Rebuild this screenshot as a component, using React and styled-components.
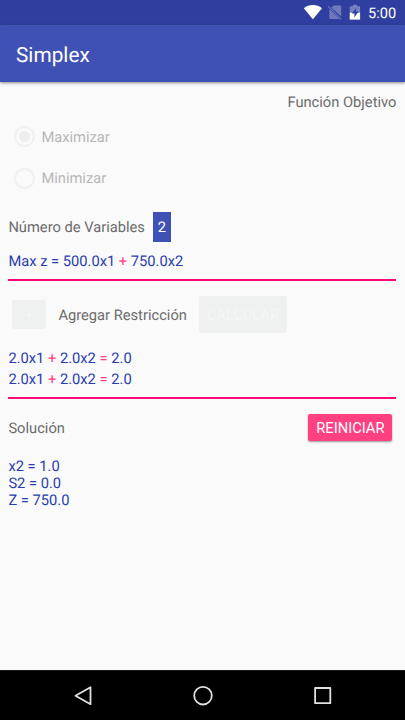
import styled, { createGlobalStyle } from "styled-components"

const GlobalStyle = createGlobalStyle`
  * {
    box-sizing: border-box;
  }
  body {
    margin: 0;
    background: #fafafa;
    font-family: Roboto, "Liberation Sans", sans-serif;
    text-rendering: geometricPrecision;
  }
`
const Screen = styled.div`
  display: flex;
  flex-direction: column;
  width: 405px;
  height: 720px;
  overflow: hidden;
  background: #fafafa;
  color: #6c6c6c;
  font-size: 14.7px;
`
const StatusBar = styled.header`
  display: flex;
  align-items: center;
  justify-content: flex-end;
  flex: none;
  height: 25px;
  padding-right: 9px;
  background: #303f9f;
  color: #fff;
  font-size: 14.6px;

  svg {
    display: block;
  }
`
const Clock = styled.span`
  margin: 1px 0 0 7px;
  width: 28px;
  white-space: nowrap;
`
const AppBar = styled.div`
  display: flex;
  align-items: center;
  flex: none;
  height: 57px;
  padding: 4px 16px 0;
  background: #3f51b5;
  color: #fff;
  box-shadow: 0 1px 3px rgba(0, 0, 0, 0.45);
`
const Title = styled.h1`
  margin: 0;
  font-size: 20.8px;
  font-weight: 400;
`
const Content = styled.main`
  display: flex;
  flex-direction: column;
  flex: 1;
  padding: 10px 8.6px 0 8.4px;
`
const SectionLabel = styled.div`
  height: 20px;
  line-height: 20px;
  text-align: right;
`
const RadioGroup = styled.div`
  display: flex;
  flex-direction: column;
  padding: 4px 0 0 6px;
`
const RadioOption = styled.label`
  display: flex;
  align-items: center;
  gap: 6px;
  height: 41.5px;
  color: #b7b7b7;
`
const RadioMark = styled.span`
  display: grid;
  place-items: center;
  width: 21px;
  height: 21px;
  border: 2px solid #f0f0f0;
  border-radius: 50%;

  &::after {
    content: "";
    width: 11px;
    height: 11px;
    border-radius: 50%;
    background: ${({ $checked }) => ($checked ? "#eeeeee" : "transparent")};
  }
`
const Row = styled.div`
  display: flex;
  align-items: center;
  justify-content: ${({ $spread }) => ($spread ? "space-between" : "flex-start")};
  height: ${({ $height }) => $height}px;
  margin-top: ${({ $top }) => $top}px;
`
const Count = styled.span`
  display: grid;
  place-items: center;
  width: 18px;
  height: 30px;
  margin-left: 8px;
  background: #3f51b5;
  color: #fff;
`
const Formula = styled.div`
  height: ${({ $line }) => $line}px;
  line-height: ${({ $line }) => $line}px;
  color: #2a3daf;
  white-space: pre;
`
const Operator = styled.span`
  color: #ff4081;
`
const FormulaList = styled.div`
  margin-top: ${({ $top }) => $top}px;
`
const Divider = styled.hr`
  width: 100%;
  height: 2px;
  margin: ${({ $top }) => $top}px 0 0;
  border: 0;
  background: #ff0a76;
`
const Button = styled.button`
  flex: none;
  width: ${({ $width }) => $width}px;
  height: ${({ $height }) => $height}px;
  margin: 0 4px;
  padding: 0;
  border: 0;
  border-radius: 2px;
  background: #ff4081;
  color: #fff;
  font: inherit;
  text-align: center;
  box-shadow: 0 1px 2px rgba(0, 0, 0, 0.4);

  &:disabled {
    background: #eff1f1;
    color: #f5f6f6;
    box-shadow: none;
  }
`
const AddLabel = styled.span`
  width: 129.5px;
  margin: 0 7px 0 8px;
  white-space: nowrap;
`
const NavBar = styled.nav`
  display: flex;
  align-items: center;
  justify-content: center;
  flex: none;
  gap: 96px;
  height: 50px;
  border-top: 1px solid #1c1c1c;
  background: #000;

  svg {
    display: block;
    fill: none;
    stroke: #e0e0e0;
    stroke-width: 1.8;
    stroke-linejoin: round;
  }
`

function StatusIcons() {
  return (
    <svg width="58" height="25" viewBox="0 0 58 25">
      <path d="M0.8 8.2C5.8 4 14 4 19 8.2L9.9 19.2Z" fill="#fff" />
      <path d="M30.6 5.6h6.6q1 0 1 1v10L28.4 7.8Z" fill="#6f7abd" />
      <path d="M26.3 9L36.4 19H27.3q-1 0-1-1Z" fill="#6f7abd" />
      <path d="M25.2 6.3L38.2 19.4" stroke="#6f7abd" strokeWidth="1.1" />
      <path d="M49.9 4.8h4v1.5h3.2v6.4H46.7V6.3h3.2Z" fill="#7580c0" />
      <path d="M46.7 12.7h10.4v6.9H46.7Z" fill="#fff" />
      <path d="M53.4 7.8L48.8 13.4h2.6v4l4-5.8h-2.6Z" fill="#303f9f" />
    </svg>
  )
}

function Equation({ parts, line }) {
  return (
    <Formula $line={line}>
      {parts.map((part, i) => (i % 2 ? <Operator key={i}>{` ${part} `}</Operator> : part))}
    </Formula>
  )
}

const constraints = [
  ["2.0x1", "+", "2.0x2", "=", "2.0"],
  ["2.0x1", "+", "2.0x2", "=", "2.0"],
]
const solution = ["x2 = 1.0", "S2 = 0.0", "Z = 750.0"]

export default function App() {
  return (
    <Screen>
      <GlobalStyle />
      <StatusBar>
        <StatusIcons />
        <Clock>5:00</Clock>
      </StatusBar>
      <AppBar>
        <Title>Simplex</Title>
      </AppBar>
      <Content>
        <SectionLabel>Función Objetivo</SectionLabel>
        <RadioGroup>
          <RadioOption>
            <RadioMark $checked />
            Maximizar
          </RadioOption>
          <RadioOption>
            <RadioMark />
            Minimizar
          </RadioOption>
        </RadioGroup>
        <Row $height={30} $top={13}>
          Número de Variables
          <Count>2</Count>
        </Row>
        <FormulaList $top={9}>
          <Equation line={20} parts={["Max z = 500.0x1", "+", "750.0x2"]} />
        </FormulaList>
        <Divider $top={8} />
        <Row $height={37} $top={15}>
          <Button disabled $width={34} $height={29}>+</Button>
          <AddLabel>Agregar Restricción</AddLabel>
          <Button disabled $width={88} $height={37}>CALCULAR</Button>
        </Row>
        <FormulaList $top={15}>
          {constraints.map((parts, i) => (
            <Equation key={i} line={20.5} parts={parts} />
          ))}
        </FormulaList>
        <Divider $top={8} />
        <Row $spread $height={27} $top={15}>
          Solución
          <Button $width={84} $height={27}>REINICIAR</Button>
        </Row>
        <FormulaList $top={17}>
          {solution.map((row) => (
            <Formula key={row} $line={17}>{row}</Formula>
          ))}
        </FormulaList>
      </Content>
      <NavBar>
        <svg width="24" height="24" viewBox="0 0 24 24">
          <path d="M19.5 3.2v17L4.5 11.7Z" />
        </svg>
        <svg width="24" height="24" viewBox="0 0 24 24">
          <circle cx="12" cy="11.7" r="8.8" />
        </svg>
        <svg width="24" height="24" viewBox="0 0 24 24">
          <path d="M4.1 4h15.2v15.2H4.1Z" />
        </svg>
      </NavBar>
    </Screen>
  )
}
